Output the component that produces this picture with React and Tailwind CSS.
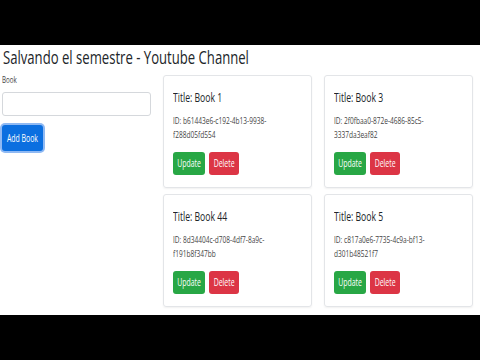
import React from 'react';

const books = [
    { id: 'b61443e6-c192-4b13-9938-', id2: 'f288d05fd554', title: 'Book 1' },
    { id: '2f0fbaa0-872e-4686-85c5-', id2: '3337da3eaf82', title: 'Book 3' },
    { id: '8d34404c-d708-4df7-8a9c-', id2: 'f191b8f347bb', title: 'Book 44' },
    { id: 'c817a0e6-7735-4c9a-bf13-', id2: 'd301b48521f7', title: 'Book 5' },
];

const font = { fontFamily: '"Open Sans", "Noto Sans", sans-serif' };

// the capture is squeezed sideways, so text gets narrowed
function Sq({ children, className = '' }) {
    return <span className={`inline-block whitespace-nowrap scale-x-[0.69] ${className}`}>{children}</span>;
}

export default function App() {
    return (
        <div className="w-[480px] h-[360px] bg-black flex flex-col overflow-hidden" style={font}>
            <div className="h-[45px] shrink-0" />

            {/* Page */}
            <div className="h-[270px] shrink-0 bg-white text-[#212529]">
                <h1 className="text-[19px] leading-[24px] pl-[3px]">
                    <Sq className="origin-left">Salvando el semestre - Youtube Channel</Sq>
                </h1>

                <div className="flex pt-[6px]">
                    {/* Form */}
                    <div className="w-[149px] ml-[2px] shrink-0">
                        <label className="block text-[9px] leading-[10px] text-[#444]">
                            <Sq className="origin-left">Book</Sq>
                        </label>
                        <input className="mt-[7px] block w-[149px] h-[24px] border border-[#d5d8dc] rounded-[3px] bg-white" />
                        <button className="mt-[9px] h-[26px] w-[41px] rounded-[3px] bg-[#0b6fe0] text-white text-[10px] ring-2 ring-[#8fb9f3] flex items-center justify-center">
                            <Sq>Add Book</Sq>
                        </button>
                    </div>

                    {/* Books */}
                    <div className="ml-[12px] grid grid-cols-[149px_149px] gap-x-[12px] gap-y-[6px]">
                        {books.map((book) => (
                            <div key={book.title} className="h-[113px] border border-[#e3e5e8] rounded-[3px] shadow-[0_1px_2px_rgba(0,0,0,0.06)] pl-[9px] pt-[14px]">
                                <p className="text-[12.5px] leading-[16px] font-medium">
                                    <Sq className="origin-left">Title: {book.title}</Sq>
                                </p>
                                <div className="mt-[8px] text-[9.5px] leading-[14px] text-[#444]">
                                    <Sq className="origin-left block">ID: {book.id}</Sq>
                                    <Sq className="origin-left block">{book.id2}</Sq>
                                </div>
                                <div className="mt-[10px] flex gap-[4px]">
                                    <button className="h-[23px] w-[32px] rounded-[3px] bg-[#28a745] text-white text-[10px] flex items-center justify-center">
                                        <Sq>Update</Sq>
                                    </button>
                                    <button className="h-[23px] w-[30px] rounded-[3px] bg-[#dc3545] text-white text-[10px] flex items-center justify-center">
                                        <Sq>Delete</Sq>
                                    </button>
                                </div>
                            </div>
                        ))}
                    </div>
                </div>
            </div>
        </div>
    );
}
